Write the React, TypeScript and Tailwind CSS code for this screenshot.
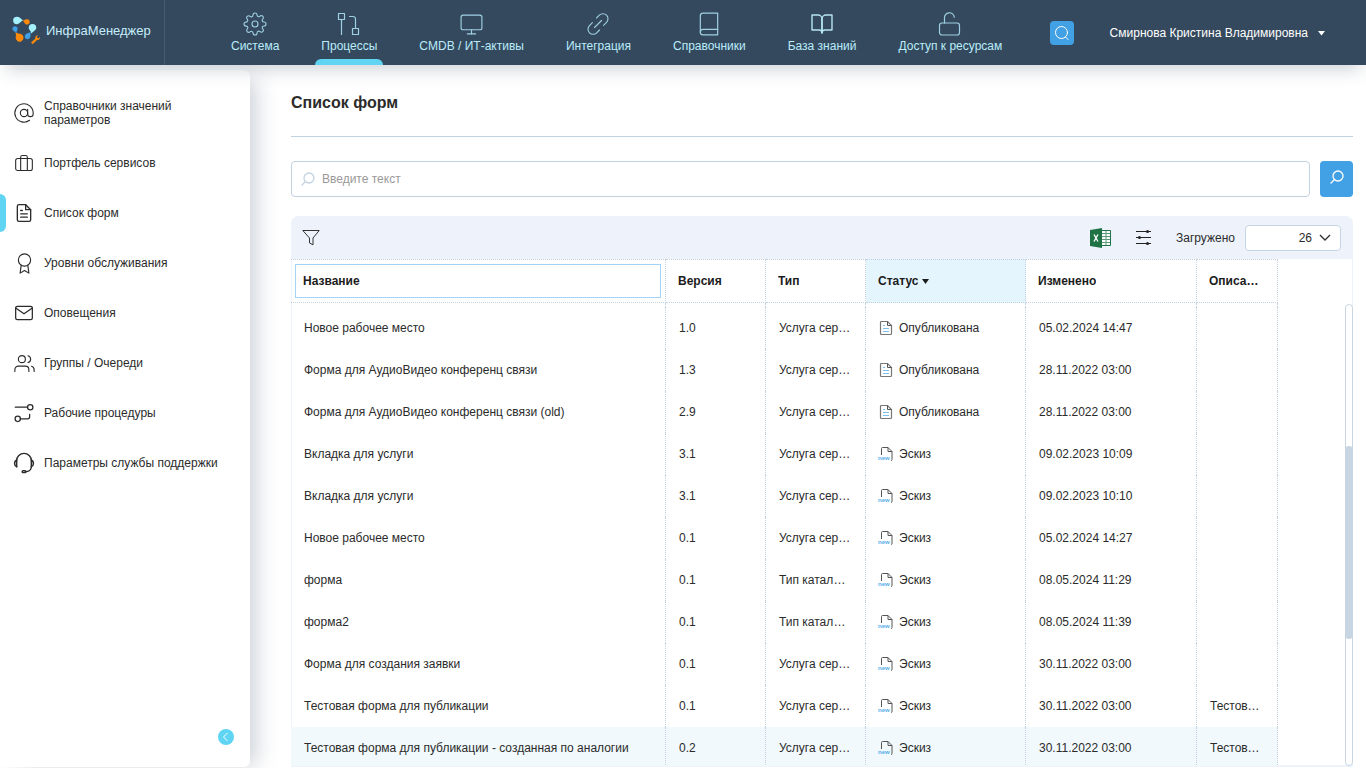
import type { ReactNode } from "react";
import { FiAtSign, FiAward, FiBook, FiBookOpen, FiFileText, FiMail, FiMonitor, FiSettings, FiUsers } from "react-icons/fi";

type LineProps = { size?: number; weight?: number; children: ReactNode };

function Line({ size = 24, weight = 1.2, children }: LineProps) {
  return (
    <svg
      width={size}
      height={size}
      viewBox="0 0 24 24"
      fill="none"
      stroke="currentColor"
      strokeWidth={weight}
      strokeLinecap="round"
      strokeLinejoin="round"
    >
      {children}
    </svg>
  );
}

function Logo() {
  return (
    <svg width="30" height="30" viewBox="11 16 30 30" className="shrink-0">
      <g fill="#a4f0fc">
        <path d="M17 16.8c2.3 0 3.5 1.8 6 3.4-2.5 1.2-3.8 4-6 4a3.9 3.7 0 0 1 0-7.4z" />
        <path d="M36.3 27.700c0 2.5-2.600 3.200-5.200 5.800.2-3-2.400-3.500-2.400-5.800a3.800 3.800 0 0 1 7.600 0z" />
      </g>
      <g fill="#ff8a0a">
        <path d="M26.800 19.200a2.700 2.700 0 1 1-.8 5.200c-1.500-.8-1.500-2.600-3.500-4 1.700.3 2.800-1.200 4.300-1.200z" />
        <path d="M15.200 32c2 1.800 4.600 1.200 6.700 2.600a3.900 3.900 0 1 1-6.200 3.400c0-2.300.9-3.600-.5-6z" />
        <path d="M31 42.600l4.400-4.100c-.5-1.600.7-3.400 2.800-3.300l-1.300 1.600.5 1.200 1.300.2 1.300-1.200c.4 1.900-1.300 3.400-3 3l-4.300 4.200z" />
      </g>
      <g fill="#419fe6">
        <path d="M15 26.200a2.700 2.700 0 0 1 2.600 3.300c-.4 1.200-1.300 1.500-.9 4-1-2.200-4.300-2.300-4.300-4.800a2.500 2.500 0 0 1 2.600-2.500z" />
        <path d="M31 31.300c-1.300 2.400.2 3.600-.8 6a2.800 2.800 0 1 1-4.600-2.900c1.500-1.400 3.800-1 5.400-3.100z" />
      </g>
    </svg>
  );
}

const nav = [
  { label: "Система", icon: <FiSettings size={24} strokeWidth={1.1} /> },
  {
    label: "Процессы",
    active: true,
    icon: (
      <Line>
        <path d="M1.500 1.500h6v6h-6zM4.500 7.500v15M15.500 16.500h6v6h-6zM18.500 16.500V7a2.500 2.500 0 0 0-2.500-2.500h-3.500" />
      </Line>
    ),
  },
  { label: "CMDB / ИТ-активы", icon: <FiMonitor size={25} strokeWidth={1.1} /> },
  {
    label: "Интеграция",
    icon: (
      <Line weight={1.1}>
        <path d="M8.500 15.500l7-7M10.500 6l2.800-2.800a5 5 0 0 1 7.200 7.200L17.600 13.300M13.500 18l-2.800 2.800a5 5 0 0 1-7.200-7.200l2.900-2.900" />
      </Line>
    ),
  },
  { label: "Справочники", icon: <FiBook size={26} strokeWidth={1.1} /> },
  { label: "База знаний", icon: <FiBookOpen size={24} strokeWidth={1.4} className="text-[#b5e4f3]" /> },
  {
    label: "Доступ к ресурсам",
    icon: (
      <Line>
        <rect x="1.500" y="11" width="20" height="12" rx="2.500" />
        <path d="M6.500 11V6.200a4.900 4.900 0 0 1 9.800-1" />
      </Line>
    ),
  },
];

const menu = [
  { label: "Справочники значений параметров", icon: <FiAtSign size={22} strokeWidth={1.2} /> },
  {
    label: "Портфель сервисов",
    icon: (
      <Line size={20} weight={1.300}>
        <rect x="2" y="6.500" width="20" height="14.500" rx="2.500" />
        <path d="M8 21V5a2 2 0 0 1 2-2h4a2 2 0 0 1 2 2v16" />
      </Line>
    ),
  },
  { label: "Список форм", active: true, icon: <FiFileText size={20} strokeWidth={1.6} /> },
  { label: "Уровни обслуживания", icon: <FiAward size={21} strokeWidth={1.3} /> },
  { label: "Оповещения", icon: <FiMail size={20} strokeWidth={1.5} /> },
  { label: "Группы / Очереди", icon: <FiUsers size={21} strokeWidth={1.3} /> },
  {
    label: "Рабочие процедуры",
    icon: (
      <Line size={20} weight={1.500}>
        <path d="M1.500 5H16M7.500 19h8.800a2.500 2.500 0 0 0 2.500-2.500v-3" />
        <circle cx="19.500" cy="5" r="3.200" />
        <circle cx="4.500" cy="19" r="3.200" />
      </Line>
    ),
  },
  {
    label: "Параметры службы поддержки",
    icon: (
      <Line size={22} weight={1.600}>
        <path d="M4 16V9.500a8 8 0 0 1 16 0V16c0 3.500-3 5.500-6.500 5.500" />
        <path d="M4 9c-3 .8-3 6 0 7M20 9c3 .8 3 6 0 7" />
        <rect x="10" y="20.500" width="4" height="2" rx="1" />
      </Line>
    ),
  },
];

const columns = ["Название", "Версия", "Тип", "Статус", "Изменено", "Описание"];

const service = "Услуга сервиса";
const catalog = "Тип каталога услуг";

const rows = [
  { name: "Новое рабочее место", version: "1.0", type: service, published: true, changed: "05.02.2024 14:47", note: "" },
  { name: "Форма для АудиоВидео конференц связи", version: "1.3", type: service, published: true, changed: "28.11.2022 03:00", note: "" },
  { name: "Форма для АудиоВидео конференц связи (old)", version: "2.9", type: service, published: true, changed: "28.11.2022 03:00", note: "" },
  { name: "Вкладка для услуги", version: "3.1", type: service, published: false, changed: "09.02.2023 10:09", note: "" },
  { name: "Вкладка для услуги", version: "3.1", type: service, published: false, changed: "09.02.2023 10:10", note: "" },
  { name: "Новое рабочее место", version: "0.1", type: service, published: false, changed: "05.02.2024 14:27", note: "" },
  { name: "форма", version: "0.1", type: catalog, published: false, changed: "08.05.2024 11:29", note: "" },
  { name: "форма2", version: "0.1", type: catalog, published: false, changed: "08.05.2024 11:39", note: "" },
  { name: "Форма для создания заявки", version: "0.1", type: service, published: false, changed: "30.11.2022 03:00", note: "" },
  { name: "Тестовая форма для публикации", version: "0.1", type: service, published: false, changed: "30.11.2022 03:00", note: "Тестовая форма" },
  { name: "Тестовая форма для публикации - созданная по аналогии", version: "0.2", type: service, published: false, changed: "30.11.2022 03:00", note: "Тестовая форма" },
];

function StatusIcon({ published }: { published: boolean }) {
  if (published) {
    return (
      <svg width="14" height="16" viewBox="0 0 14 16" fill="none" className="shrink-0">
        <path d="M1.500 2.500a1 1 0 0 1 1-1H8.500l4 4v8a1 1 0 0 1-1 1h-9a1 1 0 0 1-1-1z" stroke="#777" strokeWidth="1.200" />
        <path d="M8.500 1.500v4h4" stroke="#555" />
        <path d="M4 5.500h2M4 8.500h6M4 11.500h6" stroke="#7cc0f0" />
      </svg>
    );
  }
  return (
    <svg width="14" height="16" viewBox="0 0 14 16" fill="none" className="shrink-0 overflow-visible">
      <path d="M2.500 9V2.500a1 1 0 0 1 1-1H9l4 4v8a1 1 0 0 1-1 1" stroke="#555" />
      <path d="M9 1.500v4h4" stroke="#555" />
      <text x="-1" y="14" fontSize="6" fontWeight="bold" fill="#58aee8" fontFamily="Liberation Sans, sans-serif">
        new
      </text>
    </svg>
  );
}

function Loupe({ className }: { className?: string }) {
  return (
    <svg width="14" height="14" viewBox="0 0 14 14" fill="none" stroke="currentColor" strokeWidth="1.300" strokeLinecap="round" className={className}>
      <circle cx="8" cy="6" r="5" />
      <path d="M4.500 9.500L1 13" />
    </svg>
  );
}

function Header() {
  return (
    <header className="relative z-10 flex h-[65px] shrink-0 items-center bg-[#34495e] shadow-[0_10px_18px_-6px_rgba(52,73,94,0.25)]">
      <a href="#" className="flex h-full w-[165px] shrink-0 items-center gap-[5px] border-r border-[#465c72] pb-1 pl-[11px] text-[13px] text-[#c5edfb]">
        <Logo />
        <span>ИнфраМенеджер</span>
      </a>
      <nav className="ml-[60px] flex h-full gap-[30px]">
        {nav.map((item) => (
          <a key={item.label} href="#" className="relative flex flex-col items-center px-1.5 pt-3 whitespace-nowrap text-[#b9ecfa]">
            <span className="flex h-6 items-center text-[#9fcfe2]">{item.icon}</span>
            <span className="mt-0.5 leading-4">{item.label}</span>
            {item.active && <span className="absolute inset-x-0 bottom-0 h-1.5 rounded-t-md bg-[#5fd5f3]" />}
          </a>
        ))}
      </nav>
      <button aria-label="Поиск" className="ml-[42px] flex size-6 items-center justify-center rounded-sm bg-[#42a0e4] text-white">
        <svg width="16" height="16" viewBox="0 0 16 16" fill="none" stroke="currentColor" strokeLinecap="round">
          <circle cx="7.500" cy="7.500" r="6" />
          <path d="M11.500 12l2.500 2.500" />
        </svg>
      </button>
      <button className="mr-[41px] ml-auto flex items-center gap-2.5 whitespace-nowrap text-white">
        Смирнова Кристина Владимировна
        <svg width="7" height="7" viewBox="0 0 7 7" fill="currentColor">
          <path d="M0 2h7L3.500 6.500z" />
        </svg>
      </button>
    </header>
  );
}

function Sidebar() {
  return (
    <aside className="mt-[5px] mb-px flex w-[250px] shrink-0 flex-col rounded-r-md bg-white pt-[18px] shadow-[12px_4px_20px_-6px_rgba(52,73,94,0.25)]">
      <nav>
        {menu.map((item) => (
          <a key={item.label} href="#" className="relative flex h-[50px] items-center gap-2 pr-8 pl-3 leading-[14px]">
            {item.active && <span className="absolute inset-y-1.5 left-0 w-1.5 rounded-r-md bg-[#5fd5f3]" />}
            <span className="flex w-6 shrink-0 justify-center">{item.icon}</span>
            <span>{item.label}</span>
          </a>
        ))}
      </nav>
      <button aria-label="Свернуть меню" className="mt-auto mr-4 mb-[22px] flex size-4 items-center justify-center self-end rounded-full bg-[#5fd5f3] text-white">
        <svg width="10" height="10" viewBox="0 0 10 10" fill="none" stroke="currentColor">
          <path d="M6.500 1l-4 4 4 4" />
        </svg>
      </button>
    </aside>
  );
}

function Toolbar() {
  return (
    <div className="flex h-[43px] shrink-0 items-center bg-[#eef3fb] pr-3 pl-[11px]">
      <button aria-label="Фильтр">
        <svg width="18" height="18" viewBox="0 0 18 18" fill="none" stroke="#333" strokeLinejoin="round">
          <path d="M.8 1.500h16.400L11 9v6.800L7.500 14V9z" />
        </svg>
      </button>
      <button aria-label="Экспорт в Excel" className="ml-auto">
        <svg width="21" height="20" viewBox="0 0 21 20">
          <path d="M11 2.500h9.500v15H11z" fill="#fff" stroke="#1f7244" />
          <path d="M12 5.500h8M12 8.500h8M12 11.500h8M12 14.500h8M16 3v14" stroke="#5b9a78" />
          <path d="M0 2l12-2v20L0 18z" fill="#1f7244" />
          <path d="M4 6.500l4 7M8 6.500l-4 7" stroke="#fff" strokeWidth="1.400" />
        </svg>
      </button>
      <button aria-label="Настройка столбцов" className="ml-6">
        <svg width="17" height="15" viewBox="0 0 17 15" stroke="#222">
          <path d="M1 1.500h15M1 7.500h15M1 13.500h15" />
          <g fill="#222" stroke="none">
            <circle cx="12.500" cy="1.500" r="1.500" />
            <circle cx="4.500" cy="7.500" r="1.500" />
            <circle cx="12.500" cy="13.500" r="1.500" />
          </g>
        </svg>
      </button>
      <label htmlFor="loaded" className="ml-6">
        Загружено
      </label>
      <div className="relative ml-2.5">
        <select id="loaded" defaultValue="26" className="h-[26px] w-24 appearance-none rounded border border-[#c6d5e2] bg-white pr-7 [text-align-last:right]">
          <option>26</option>
        </select>
        <svg width="12" height="8" viewBox="0 0 12 8" fill="none" stroke="#333" strokeWidth="1.400" className="pointer-events-none absolute top-[9px] right-2.5">
          <path d="M1 1l5 5 5-5" />
        </svg>
      </div>
    </div>
  );
}

function FormsTable() {
  const cell = "truncate border-r border-dotted border-[#c3d2e0] px-[13px]";

  return (
    <table className="w-full table-fixed border-separate border-spacing-0 text-left">
      <colgroup>
        <col className="w-[375px]" />
        <col className="w-[100px]" />
        <col className="w-[100px]" />
        <col className="w-[160px]" />
        <col className="w-[171px]" />
        <col className="w-[81px]" />
        <col />
      </colgroup>
      <thead>
        <tr className="h-11">
          {columns.map((title) => (
            <th
              key={title}
              className={`border-y border-r border-dotted border-[#c3d2e0] px-1 py-0 ${title === "Статус" ? "bg-[#e4f5fe]" : ""}`}
            >
              <button
                className={`flex h-[34px] w-full items-center gap-1 border px-[7px] font-bold text-[#1c1c1c] ${title === "Название" ? "border-[#a3d4f7]" : "border-transparent"}`}
              >
                <span className="truncate">{title}</span>
                {title === "Статус" && (
                  <svg width="7" height="5" viewBox="0 0 7 5" fill="currentColor">
                    <path d="M0 0h7L3.500 5z" />
                  </svg>
                )}
              </button>
            </th>
          ))}
          <td />
        </tr>
      </thead>
      <tbody>
        <tr aria-hidden="true" className="h-1">
          {columns.map((title) => (
            <td key={title} className="border-r border-dotted border-[#c3d2e0] p-0" />
          ))}
        </tr>
        {rows.map((row, i) => {
          const hovered = i === rows.length - 1 ? "bg-[#f1f9fd]" : "";
          return (
            <tr key={i} className="h-[42px]">
              <td className={`${cell} ${hovered}`}>{row.name}</td>
              <td className={`${cell} ${hovered}`}>{row.version}</td>
              <td className={`${cell} ${hovered}`}>{row.type}</td>
              <td className={`${cell} ${hovered}`}>
                <span className="flex items-center gap-1.5">
                  <StatusIcon published={row.published} />
                  {row.published ? "Опубликована" : "Эскиз"}
                </span>
              </td>
              <td className={`${cell} ${hovered}`}>{row.changed}</td>
              <td className={`${cell} ${hovered}`}>{row.note}</td>
            </tr>
          );
        })}
      </tbody>
    </table>
  );
}

export default function App() {
  return (
    <div className="flex h-screen flex-col overflow-hidden bg-white font-['Liberation_Sans',Arial,sans-serif] text-[12px] text-[#2b2b2b]">
      <Header />
      <div className="flex min-h-0 flex-1">
        <Sidebar />
        <main className="flex min-w-0 flex-1 flex-col pr-[13px] pb-px pl-[41px]">
          <h1 className="border-b border-[#c3d2e0] pt-[26px] pb-[21px] text-[16px] leading-6 font-bold">Список форм</h1>
          <form className="mt-6 flex gap-2.5">
            <div className="relative flex-1">
              <Loupe className="absolute top-[11px] left-2.5 text-[#c3d2e0]" />
              <input
                aria-label="Поиск по списку"
                placeholder="Введите текст"
                className="h-9 w-full rounded border border-[#c3d2e0] pr-3 pl-[30px] placeholder:text-[#999]"
              />
            </div>
            <button type="button" aria-label="Найти" className="flex h-9 w-[33px] items-center justify-center rounded bg-[#42a0e4] pb-1 text-white">
              <Loupe />
            </button>
          </form>
          <section className="relative mt-[19px] flex min-h-0 flex-1 flex-col overflow-hidden rounded-t-lg border-b border-[#eef3fb] shadow-[inset_0_0_0_1px_#eef3fb]">
            <Toolbar />
            <div className="min-h-0 flex-1 overflow-hidden">
              <FormsTable />
            </div>
            <div className="absolute top-[88px] right-0 bottom-0 w-2 rounded-full border border-[#c8d5e2] bg-white">
              <div className="absolute -inset-x-px top-[141px] h-[193px] rounded-full bg-[#c8d5e2]" />
            </div>
          </section>
        </main>
      </div>
    </div>
  );
}
